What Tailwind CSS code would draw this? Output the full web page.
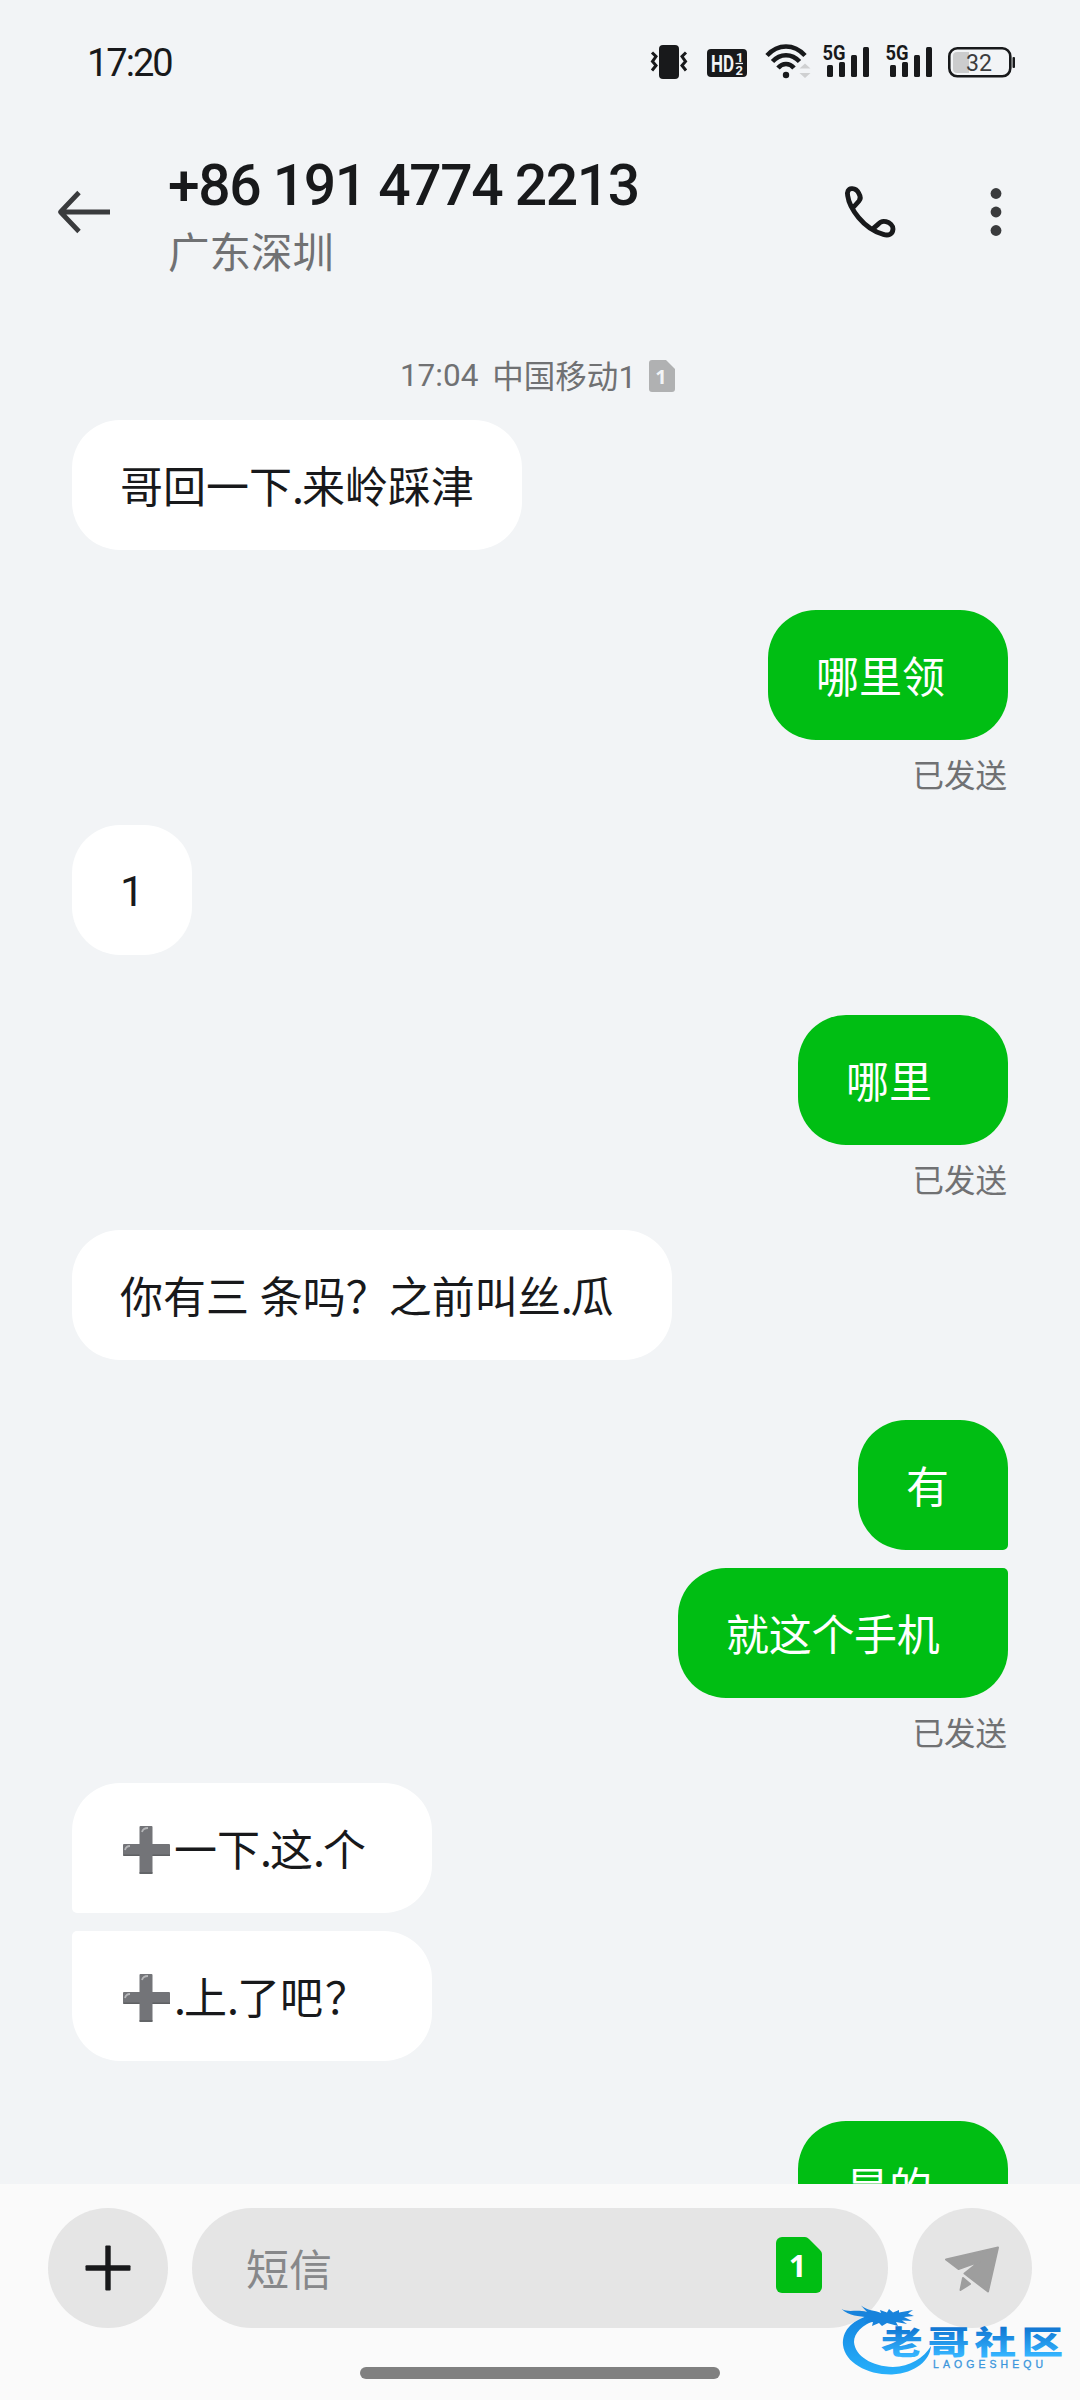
<!DOCTYPE html>
<html lang="zh-CN">
<head>
<meta charset="utf-8">
<title>短信</title>
<script src="https://cdn.jsdelivr.net/npm/@tailwindcss/browser@4"></script>
</head>
<body class="bg-[#f2f4f6]">
<div class="relative w-[1080px] h-[2400px] flex flex-col overflow-hidden bg-[#f2f4f6] text-[#18191b] font-['Roboto','Noto_Sans_CJK_SC',sans-serif]">

  <!-- status bar -->
  <div class="h-[124px] shrink-0 flex items-center justify-between pl-[87px] pr-[63px]">
    <span class="text-[38px] leading-none tracking-[-2px] pt-[2px]">17:20</span>
    <div class="flex items-center h-9">
      <svg class="w-[38px] h-9" viewBox="0 0 38 36" fill="none" stroke="#18191b" stroke-width="3"><rect x="9" y="1" width="20" height="34" rx="4" fill="#18191b" stroke="none"/><path d="M2 8.500l4 4-3.500 5 3.500 4-4 5M36 8.500l-4 4 3.500 5-3.500 4 4 5"/></svg>
      <svg class="w-[42px] h-9 ml-[18px]" viewBox="0 0 42 36" fill="#f2f4f6"><rect x="1" y="5" width="40" height="28" rx="4" fill="#18191b"/><text x="5" y="27.500" font-family="Roboto" font-weight="700" font-size="23" textLength="23" lengthAdjust="spacingAndGlyphs">HD</text><text x="30" y="18" font-family="Roboto" font-weight="700" font-size="13">1</text><text x="29.500" y="30.500" font-family="Roboto" font-weight="700" font-size="13">2</text><path d="M29.500 18.800h7.500v1.300h-7.500z"/></svg>
      <svg class="w-12 h-9 ml-4" viewBox="0 0 48 36" fill="none" stroke="#18191b" stroke-width="4.500"><path d="M3 11.500C14 -.5 30 -.5 41 11.500M8.500 17.500C16 9 28 9 35.500 17.500M14 24C18.500 18.500 25.500 18.500 30 24"/><circle cx="22" cy="31" r="3.200" fill="#18191b" stroke="none"/><path d="M35.500 24.500l5.500-5 5.500 5zM35.500 29l5.500 5 5.500-5z" fill="#cfd0d1" stroke="none"/></svg>
      <svg class="w-12 h-9 ml-2.5 overflow-visible" viewBox="0 0 48 36" fill="#18191b"><text x="0.500" y="15.500" font-family="Roboto" font-weight="700" font-size="20" textLength="23" lengthAdjust="spacingAndGlyphs">5G</text><rect x="5" y="21" width="6" height="12" rx="1.500"/><rect x="17" y="18" width="6" height="15" rx="1.500"/><rect x="29" y="11" width="6" height="22" rx="1.500"/><rect x="41" y="3" width="6" height="30" rx="1.500"/></svg>
      <svg class="w-12 h-9 ml-[15px] overflow-visible" viewBox="0 0 48 36" fill="#18191b"><text x="0.500" y="15.500" font-family="Roboto" font-weight="700" font-size="20" textLength="23" lengthAdjust="spacingAndGlyphs">5G</text><rect x="5" y="21" width="6" height="12" rx="1.500"/><rect x="17" y="18" width="6" height="15" rx="1.500"/><rect x="29" y="11" width="6" height="22" rx="1.500"/><rect x="41" y="3" width="6" height="30" rx="1.500"/></svg>
      <svg class="w-[70px] h-9 ml-3.5" viewBox="0 0 70 36"><rect x="2.300" y="4.300" width="61" height="28" rx="8" fill="none" stroke="#18191b" stroke-width="2.600"/><path d="M22 8v21H10a4 4 0 0 1-4-4V12a4 4 0 0 1 4-4z" fill="#cbcccd"/><rect x="65.500" y="13" width="2.500" height="11" rx="1" fill="#18191b"/><text x="19" y="26.500" font-family="Roboto" font-size="24" fill="#3c3d3f" textLength="26" lengthAdjust="spacingAndGlyphs">32</text></svg>
    </div>
  </div>

  <!-- header -->
  <header class="h-[176px] shrink-0 flex items-start pl-[54px] pr-[54px]">
    <svg class="w-[60px] h-[60px] mt-[58px]" viewBox="0 0 60 60" fill="none" stroke="#3a3b3d" stroke-width="4.800"><path d="M56 30H7M25 10.500L6.500 30L25 49.500" stroke-linejoin="round"/></svg>
    <div class="ml-[54px] mt-[33px] grow flex flex-col">
      <h1 class="text-[57px] leading-[57px] font-medium tracking-[-1.45px] whitespace-nowrap">+86 191 4774 2213</h1>
      <p class="text-[41.5px] leading-[42px] mt-[15px] text-[#707173] font-['Noto_Sans_CJK_SC',sans-serif]">广东深圳</p>
    </div>
    <svg class="w-[60px] h-[57px] mt-[59px]" viewBox="180 130 180 171" fill="none" stroke="#18191b" stroke-width="14.500" stroke-linejoin="round"><path d="M221 202L237 184C243 177 242 170 237 162C231 150 224 146 215 147C204 148 201 157 203 168C208 205 250 268 310 284C325 289 338 284 339 268C339 258 330 249 318 246C307 243 300 247 294 254L280 266"/></svg>
    <svg class="w-[12px] h-[50px] ml-[90px] mt-[63px] mr-[24px]" viewBox="0 0 12 50" fill="#3a3b3d"><circle cx="6" cy="6.500" r="5.400"/><circle cx="6" cy="25" r="5.400"/><circle cx="6" cy="43.500" r="5.400"/></svg>
  </header>

  <!-- conversation -->
  <main class="h-[1884px] shrink-0 overflow-hidden px-[72px] pt-[56px] flex flex-col text-[43px] leading-[128px] font-['Noto_Sans_CJK_SC',sans-serif]">
    <div class="h-10 mb-6 flex items-center justify-center text-[31.5px] leading-10 text-[#707173] pr-[5px]">
      <span class="font-['Roboto']">17:04</span><span class="ml-3.5">中国移动<span class="font-['Roboto']">1</span></span>
      <svg class="w-[26px] h-8 ml-[13px]" viewBox="0 0 26 32"><path d="M3 0H17L26 9V29A3 3 0 0 1 23 32H3A3 3 0 0 1 0 29V3A3 3 0 0 1 3 0Z" fill="#b0b1b2"/><text x="12" y="23.500" text-anchor="middle" font-family="Open Sans" font-weight="700" font-size="20" fill="#f2f4f6">1</text></svg>
    </div>

    <div class="w-[450px] h-[130px] shrink-0 self-start rounded-[48px] bg-white pl-[48px] whitespace-nowrap">哥回一下<span class="tracking-[-2px]">.</span>来岭踩津</div>

    <div class="mt-[60px] w-[240px] h-[130px] shrink-0 self-end rounded-[48px] bg-[#00be13] text-white pl-[48px]">哪里领</div>
    <div class="h-[85px] shrink-0 self-end pt-[13px] pr-px text-[31.500px] leading-10 text-[#707173]">已发送</div>

    <div class="w-[120px] h-[130px] shrink-0 self-start rounded-[48px] bg-white pl-[48px] pt-[2px] font-['Roboto']">1</div>

    <div class="mt-[60px] w-[210px] h-[130px] shrink-0 self-end rounded-[48px] bg-[#00be13] text-white pl-[48px]">哪里</div>
    <div class="h-[85px] shrink-0 self-end pt-[13px] pr-px text-[31.500px] leading-10 text-[#707173]">已发送</div>

    <div class="w-[600px] h-[130px] shrink-0 self-start rounded-[48px] bg-white pl-[48px] whitespace-nowrap">你有三<span class="tracking-[1px]"> </span>条吗？之前叫丝<span class="tracking-[-2px]">.</span>瓜</div>

    <div class="mt-[60px] w-[150px] h-[130px] shrink-0 self-end rounded-[48px] rounded-br-[5px] bg-[#00be13] text-white pl-[48px]">有</div>
    <div class="mt-[18px] w-[330px] h-[130px] shrink-0 self-end rounded-[48px] rounded-tr-[5px] bg-[#00be13] text-white pl-[48px] tracking-[-0.3px]">就这个手机</div>
    <div class="h-[85px] shrink-0 self-end pt-[13px] pr-px text-[31.500px] leading-10 text-[#707173]">已发送</div>

    <div class="w-[360px] h-[130px] shrink-0 self-start rounded-[48px] rounded-bl-[5px] bg-white pl-[50px] flex items-center whitespace-nowrap">
      <svg class="w-12 h-12 mr-[4px] mt-[3px]" viewBox="0 0 48 48" role="img" aria-label="加号"><path d="M18.500 0h11a1 1 0 0 1 1 1v17h16.500a1 1 0 0 1 1 1v10a1 1 0 0 1-1 1H30.500v17a1 1 0 0 1-1 1h-11a1 1 0 0 1-1-1V30H2a1 1 0 0 1-1-1V19a1 1 0 0 1 1-1h15.500V1a1 1 0 0 1 1-1z" fill="#737478"/><path d="M20 6q1-4 6-4M3 24q1-4 5-4" fill="none" stroke="#b5b6b8" stroke-width="1.800"/><path d="M17.500 47h13M1.500 29.300h16M30.500 29.300H48" stroke="#5f6063" stroke-width="1.400"/></svg>
      <span class="h-[130px]">一下<span class="tracking-[-2px]">.</span>这<span class="tracking-[-2px]">.</span>个</span>
    </div>
    <div class="mt-[18px] w-[360px] h-[130px] shrink-0 self-start rounded-[48px] rounded-tl-[5px] bg-white pl-[50px] flex items-center whitespace-nowrap">
      <svg class="w-12 h-12 mr-[4px] mt-[3px]" viewBox="0 0 48 48" role="img" aria-label="加号"><path d="M18.500 0h11a1 1 0 0 1 1 1v17h16.500a1 1 0 0 1 1 1v10a1 1 0 0 1-1 1H30.500v17a1 1 0 0 1-1 1h-11a1 1 0 0 1-1-1V30H2a1 1 0 0 1-1-1V19a1 1 0 0 1 1-1h15.500V1a1 1 0 0 1 1-1z" fill="#737478"/><path d="M20 6q1-4 6-4M3 24q1-4 5-4" fill="none" stroke="#b5b6b8" stroke-width="1.800"/><path d="M17.500 47h13M1.500 29.300h16M30.500 29.300H48" stroke="#5f6063" stroke-width="1.400"/></svg>
      <span class="h-[130px]"><span class="tracking-[-2px]">.</span>上<span class="tracking-[-2px]">.</span>了吧<span class="pl-0.5">？</span></span>
    </div>

    <div class="mt-[60px] w-[210px] h-[130px] shrink-0 self-end rounded-[48px] bg-[#00be13] text-white pl-[48px]">是的</div>
  </main>

  <!-- composer -->
  <footer class="h-[216px] shrink-0 bg-[#fafafa] pt-6 flex flex-col items-center">
    <div class="flex gap-6">
      <div class="size-[120px] rounded-full bg-[#e5e5e5] flex items-center justify-center">
        <svg class="size-[46px]" viewBox="0 0 46 46" fill="#18191b"><rect x="0.500" y="20.300" width="45" height="5.400" rx="1"/><rect x="20.300" y="0.500" width="5.400" height="45" rx="1"/></svg>
      </div>
      <div class="w-[696px] h-[120px] rounded-full bg-[#e5e5e5] flex items-center justify-between pl-[54px] pr-[66px]">
        <span class="text-[43px] leading-[60px] pb-[2px] text-[#87888a] font-['Noto_Sans_CJK_SC',sans-serif]">短信</span>
        <svg class="w-[46px] h-14 mb-[6px]" viewBox="0 0 46 56"><path d="M6 0H29Q31 0 33 2L44 13Q46 15 46 17V50A6 6 0 0 1 40 56H6A6 6 0 0 1 0 50V6A6 6 0 0 1 6 0Z" fill="#00be13"/><text x="21.500" y="40" text-anchor="middle" font-family="Open Sans" font-weight="700" font-size="31" fill="#fff">1</text></svg>
      </div>
      <div class="size-[120px] rounded-full bg-[#e5e5e5]">
        <svg class="size-[120px]" viewBox="0 0 120 120" fill="#9e9e9e" stroke="#9e9e9e" stroke-width="2" stroke-linejoin="round"><path d="M34 51.500L86 39.500L76 83.500L52.500 65.500L67.500 53.500L46.500 61Z"/><path d="M51 70L58 76L48.500 82Z"/></svg>
      </div>
    </div>
    <div class="mt-[39px] w-[360px] h-3 rounded-full bg-[#808080]"></div>
  </footer>

  <!-- community watermark over the composer -->
  <svg class="absolute left-[836px] top-[2300px] w-[232px] h-20" viewBox="0 0 232 80">
    <defs>
      <linearGradient id="ring" x1="0" y1="0" x2="0" y2="1"><stop offset="0" stop-color="#1585e0"/><stop offset="1" stop-color="#27b0fb"/></linearGradient>
      <linearGradient id="word" x1="0" y1="0" x2="0" y2="1"><stop offset="0.250" stop-color="#1277d3"/><stop offset="0.850" stop-color="#35b5ff"/></linearGradient>
    </defs>
    <path fill="url(#ring)" d="M34 15C14 21 6 32 7 45C9 63 32 75 56 74.500C80 73 94 60 95 46C88 58 74 66.500 57 67C36 66.500 19 56 18 42C18 33 26 25 40 20Z"/>
    <path fill="#1783dc" d="M5.500 9C13 13 20 9 31 12L25 5.500C32 11 38 10 45 13L44 10L51 12.500L53 9L57 12.500L63 10L63 12.500L77 10L72 13.500L78 16L68 17L76 21L66 20.500L71 24L60 22L62 26L51 23L46 26L43 23L36 26L37 22L28 23L33 18C22 15 14 17 5.500 9Z"/>
    <g fill="url(#word)" font-family="Noto Sans CJK SC" font-weight="900" font-size="32">
      <text transform="translate(45 53.500) scale(1.300 1)" textLength="140" lengthAdjust="spacing">老哥社区</text>
    </g>
    <text x="97" y="67.500" font-family="Liberation Sans" font-size="10.500" fill="#3a96dc" stroke="#3a96dc" stroke-width="0.300" textLength="110" lengthAdjust="spacing">LAOGESHEQU</text>
  </svg>
</div>
</body>
</html>
